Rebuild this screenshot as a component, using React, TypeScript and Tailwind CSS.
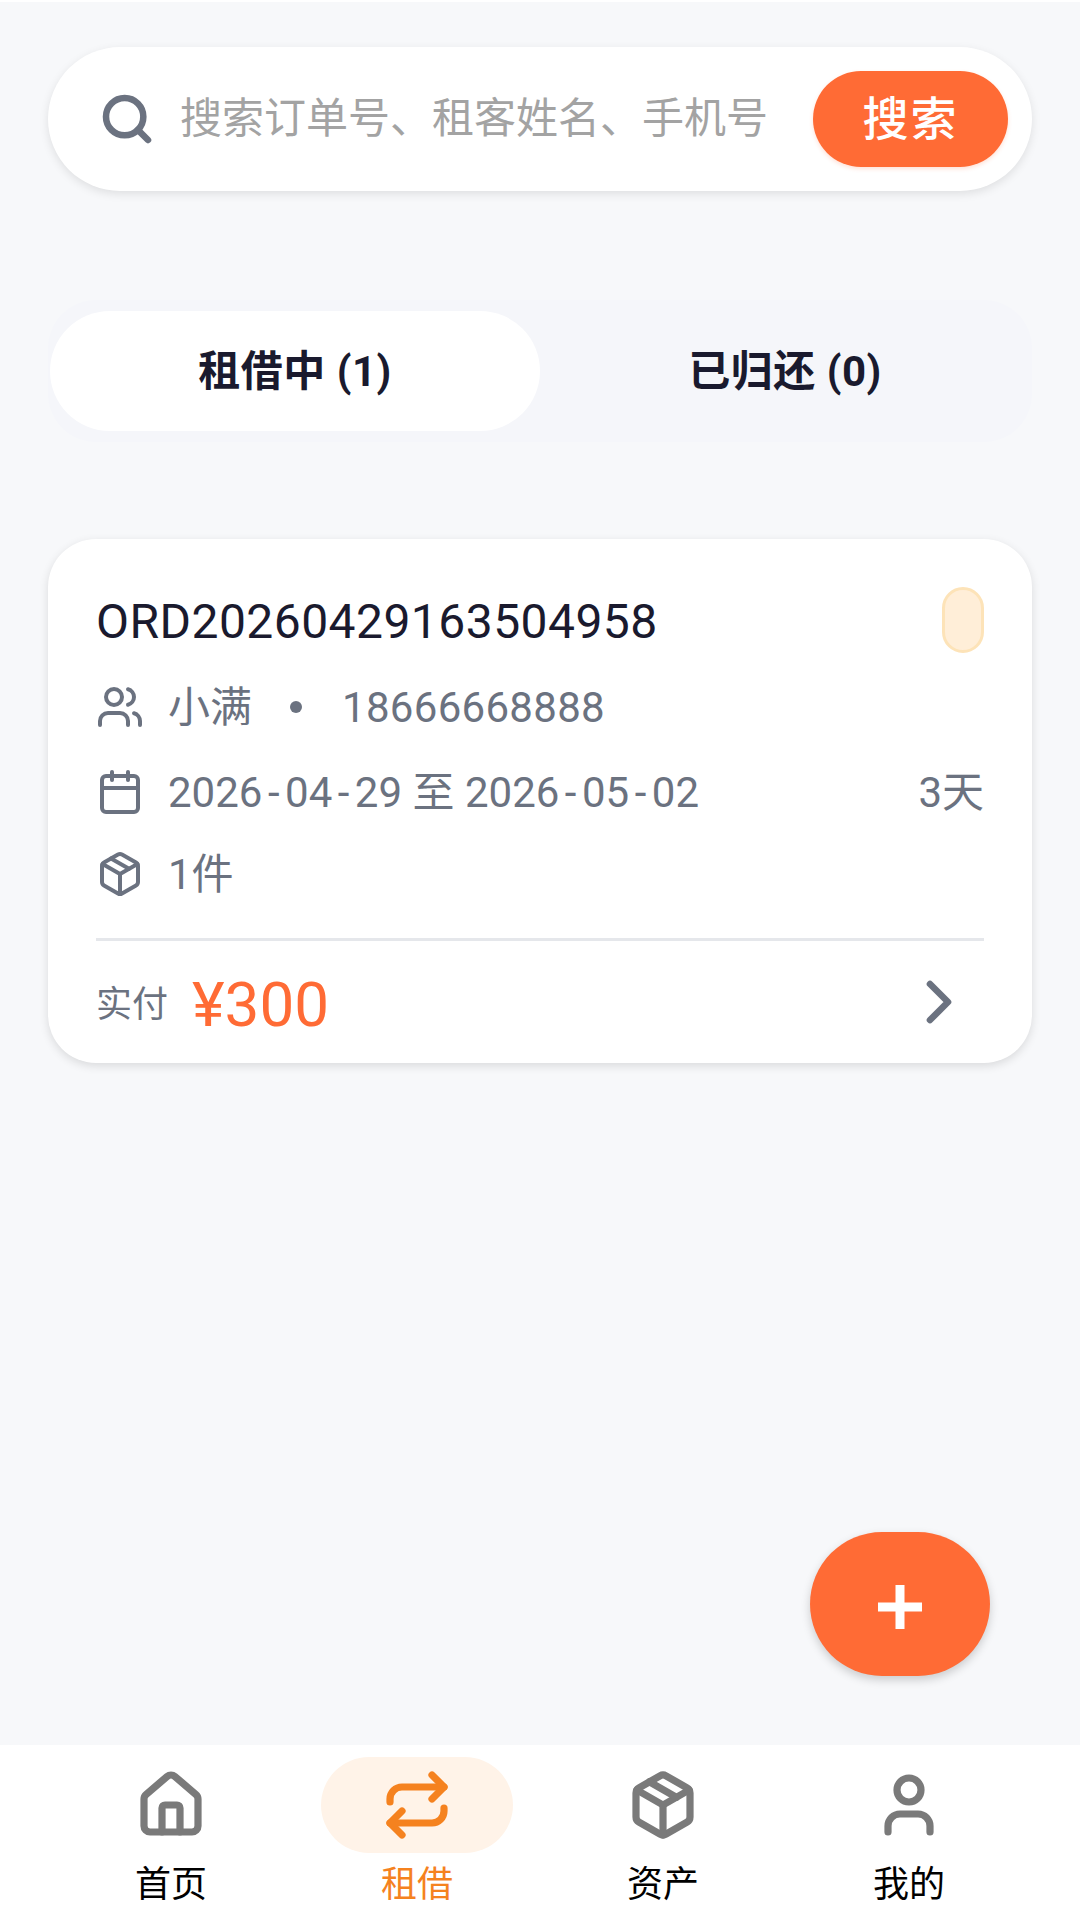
import { Calendar, ChevronRight, House, Package, Repeat, Search, User, Users } from 'lucide-react'

const fontStack = "font-['Roboto','Noto_Sans_CJK_SC',sans-serif]"

const navItems = [
  { label: '首页', icon: House },
  { label: '租借', icon: Repeat, active: true },
  { label: '资产', icon: Package },
  { label: '我的', icon: User },
]

function DateText({ value }: { value: string }) {
  const parts = value.split('-')
  return (
    <span>
      {parts.map((part, i) => (
        <span key={part + i}>
          {i > 0 && <span className="mx-[5.5px]">-</span>}
          {part}
        </span>
      ))}
    </span>
  )
}

function SearchBar() {
  return (
    <div className="flex h-[144px] items-center rounded-[72px] bg-white pl-[55px] pr-[24px] shadow-[0_3px_10px_rgba(0,0,0,0.1)]">
      <Search size={56} strokeWidth={2.8} className="ml-[-4px] shrink-0 text-[#6b7280]" />
      <span className="ml-[25px] flex-1 text-[42px] leading-none text-[#a3a3a3]">搜索订单号、租客姓名、手机号</span>
      <button className="h-[96px] w-[195px] rounded-[48px] bg-[#ff6b35] text-[46px] font-medium tracking-[2px] text-white shadow-[0_2px_4px_rgba(255,107,53,0.2)]">
        搜索
      </button>
    </div>
  )
}

function Tabs() {
  return (
    <div className="mt-[109px] flex h-[142px] items-center rounded-[48px] bg-[#f5f6fa] px-[2px]">
      <div className="flex h-[120px] flex-1 items-center justify-center rounded-[60px] bg-white text-[42px] font-bold tracking-[0.5px] text-[#1a1a2e]">
        租借中 (1)
      </div>
      <div className="flex h-[120px] flex-1 items-center justify-center text-[42px] font-bold tracking-[0.5px] text-[#1a1a2e]">
        已归还 (0)
      </div>
    </div>
  )
}

function OrderCard() {
  return (
    <div className="mt-[97px] h-[524px] rounded-[48px] bg-white px-[48px] pt-[48px] shadow-[0_3px_10px_rgba(0,0,0,0.12)]">
      <div className="flex items-start justify-between">
        <span className="text-[48px] leading-[70px] tracking-[0.45px] text-[#1a1a2e]">ORD20260429163504958</span>
        <span className="h-[66px] w-[42px] rounded-[21px] border-[3px] border-[#fde3b8] bg-[#ffeed8]" />
      </div>
      <div className="mt-[17px] flex h-[66px] items-center text-[42px] text-[#6b7280]">
        <Users size={48} strokeWidth={2} className="shrink-0" />
        <span className="ml-[24px]">小满</span>
        <span className="ml-[38px] size-[12px] rounded-full bg-[#6b7280]" />
        <span className="ml-[40px] tracking-[0.3px]">18666668888</span>
      </div>
      <div className="mt-[19px] flex h-[66px] items-center text-[42px] text-[#6b7280]">
        <Calendar size={48} strokeWidth={2} className="shrink-0" />
        <span className="ml-[24px]">
          <DateText value="2026-04-29" /> 至 <DateText value="2026-05-02" />
        </span>
        <span className="ml-auto">3天</span>
      </div>
      <div className="mt-[16px] flex h-[66px] items-center text-[42px] text-[#6b7280]">
        <Package size={48} strokeWidth={2} className="shrink-0" />
        <span className="ml-[24px]">1件</span>
      </div>
      <div className="mt-[31px] flex h-[125px] items-center border-t-[3px] border-[#e5e7eb]">
        <span className="mt-[6px] text-[36px] text-[#6b7280]">实付</span>
        <span className="ml-[24px] mt-[6px] text-[62px] font-normal leading-none text-[#ff6b35]">¥300</span>
        <ChevronRight size={72} strokeWidth={2.2} className="ml-auto mr-[9px] text-[#6b7280]" />
      </div>
    </div>
  )
}

function BottomNav() {
  return (
    <nav className="grid h-[175px] shrink-0 grid-cols-4 bg-white px-[48px]">
      {navItems.map((item) => {
        const Icon = item.icon
        return (
          <div key={item.label} className="flex flex-col items-center pt-[12px]">
            <div className={`flex h-[96px] w-[192px] items-center justify-center rounded-[48px] ${item.active ? 'bg-[#fff3e8]' : ''}`}>
              <Icon size={72} strokeWidth={2.4} className={item.active ? 'text-[#f5821f]' : 'text-[#7a7a7a]'} />
            </div>
            <span className={`mt-[8px] text-[36px] leading-[48px] ${item.active ? 'text-[#f5821f]' : 'text-black'}`}>{item.label}</span>
          </div>
        )
      })}
    </nav>
  )
}

export default function App() {
  return (
    <div className={`flex h-[1920px] w-[1080px] flex-col overflow-hidden border-t-[2px] border-white bg-[#f7f8fa] ${fontStack}`}>
      <main className="relative flex-1 px-[48px] pt-[45px]">
        <SearchBar />
        <Tabs />
        <OrderCard />
        <button className="absolute left-[810px] top-[1530px] flex h-[144px] w-[180px] items-center justify-center rounded-[72px] bg-[#ff6b35] text-white shadow-[0_4px_10px_rgba(0,0,0,0.18)]">
          <svg width="44" height="44" viewBox="0 0 44 44" className="mt-[6px]">
            <path d="M0 22h44M22 0v44" stroke="currentColor" strokeWidth="9" fill="none" />
          </svg>
        </button>
      </main>
      <BottomNav />
    </div>
  )
}
